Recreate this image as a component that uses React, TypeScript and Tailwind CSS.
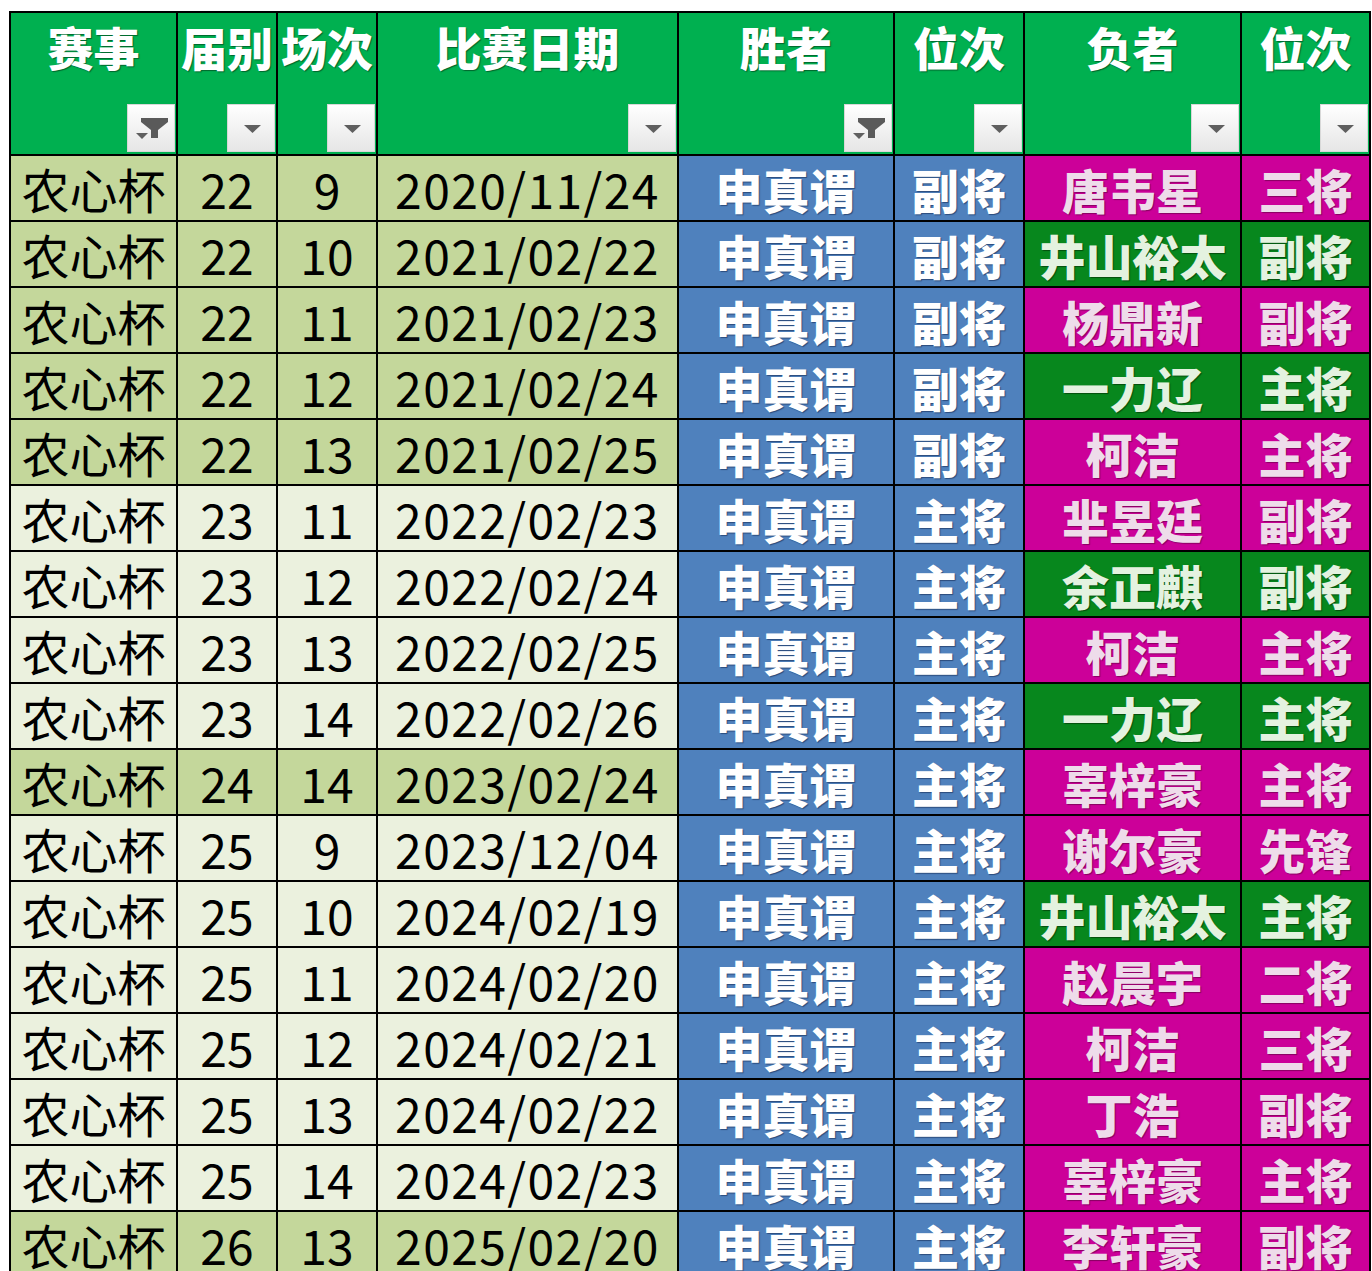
import React from "react";

type Row = {
  s: string;
  j: string;
  c: string;
  d: string;
  wp: string;
  l: string;
  lg: boolean;
  lp: string;
};

const rows: Row[] = [
  { s: "农心杯", j: "22", c: "9", d: "2020/11/24", wp: "副将", l: "唐韦星", lg: false, lp: "三将" },
  { s: "农心杯", j: "22", c: "10", d: "2021/02/22", wp: "副将", l: "井山裕太", lg: true, lp: "副将" },
  { s: "农心杯", j: "22", c: "11", d: "2021/02/23", wp: "副将", l: "杨鼎新", lg: false, lp: "副将" },
  { s: "农心杯", j: "22", c: "12", d: "2021/02/24", wp: "副将", l: "一力辽", lg: true, lp: "主将" },
  { s: "农心杯", j: "22", c: "13", d: "2021/02/25", wp: "副将", l: "柯洁", lg: false, lp: "主将" },
  { s: "农心杯", j: "23", c: "11", d: "2022/02/23", wp: "主将", l: "芈昱廷", lg: false, lp: "副将" },
  { s: "农心杯", j: "23", c: "12", d: "2022/02/24", wp: "主将", l: "余正麒", lg: true, lp: "副将" },
  { s: "农心杯", j: "23", c: "13", d: "2022/02/25", wp: "主将", l: "柯洁", lg: false, lp: "主将" },
  { s: "农心杯", j: "23", c: "14", d: "2022/02/26", wp: "主将", l: "一力辽", lg: true, lp: "主将" },
  { s: "农心杯", j: "24", c: "14", d: "2023/02/24", wp: "主将", l: "辜梓豪", lg: false, lp: "主将" },
  { s: "农心杯", j: "25", c: "9", d: "2023/12/04", wp: "主将", l: "谢尔豪", lg: false, lp: "先锋" },
  { s: "农心杯", j: "25", c: "10", d: "2024/02/19", wp: "主将", l: "井山裕太", lg: true, lp: "主将" },
  { s: "农心杯", j: "25", c: "11", d: "2024/02/20", wp: "主将", l: "赵晨宇", lg: false, lp: "二将" },
  { s: "农心杯", j: "25", c: "12", d: "2024/02/21", wp: "主将", l: "柯洁", lg: false, lp: "三将" },
  { s: "农心杯", j: "25", c: "13", d: "2024/02/22", wp: "主将", l: "丁浩", lg: false, lp: "副将" },
  { s: "农心杯", j: "25", c: "14", d: "2024/02/23", wp: "主将", l: "辜梓豪", lg: false, lp: "主将" },
  { s: "农心杯", j: "26", c: "13", d: "2025/02/20", wp: "主将", l: "李轩豪", lg: false, lp: "副将" },
];

function DropArrow() {
  return (
    <svg width="48" height="48" viewBox="0 0 48 48">
      <polygon points="16,20 33,20 24.5,28" fill="#5f5f5f" />
    </svg>
  );
}

function FilterIcon() {
  return (
    <svg width="48" height="48" viewBox="0 0 48 48">
      <polygon points="13,13 40,13 40,17 30,25 30,33 23,33 23,25 13,17" fill="#5a5a5a" />
      <polygon points="8,28 20,28 14,34" fill="#5f5f5f" />
    </svg>
  );
}

function Header({ label, filtered }: { label: string; filtered?: boolean }) {
  return (
    <div className="bg-[#00b050] flex flex-col">
      <div className="pt-[10px] text-center text-white font-black text-[46px] leading-none whitespace-nowrap [text-shadow:1px_1px_1px_rgba(0,70,30,0.7)]">
        {label}
      </div>
      <div className="flex-1" />
      <div className="self-end mr-[1px] mb-[2px] w-[48px] h-[48px] bg-linear-to-b from-white to-[#e6e6e6] border border-[#d8d8d8]">
        {filtered ? <FilterIcon /> : <DropArrow />}
      </div>
    </div>
  );
}

export default function App() {
  const headers: { t: string; f?: boolean }[] = [
    { t: "赛事", f: true },
    { t: "届别" },
    { t: "场次" },
    { t: "比赛日期" },
    { t: "胜者", f: true },
    { t: "位次" },
    { t: "负者" },
    { t: "位次" },
  ];
  return (
    <div className="w-[1372px] h-[1271px] overflow-hidden bg-white font-['Noto_Sans_CJK_SC','Noto_Sans',sans-serif]">
      <div className="ml-[9px] mt-[11px] w-[1362px] bg-black p-[2px] grid gap-[2px] grid-cols-[165px_98px_98px_299px_214px_128px_215px_127px] grid-rows-[141px] auto-rows-[64px]">
        {headers.map((h, i) => (
          <Header key={i} label={h.t} filtered={h.f} />
        ))}
        {rows.map((r, i) => {
          const base = r.j === "22" || r.j === "24" || r.j === "26" ? "bg-[#c4d79b]" : "bg-[#ebf1de]";
          const lose = r.lg
            ? "bg-[#07871d] text-[#e4f2e0] [text-shadow:1px_1px_1px_rgba(0,40,0,0.6)]"
            : "bg-[#cc0099] text-[#eedcea] [text-shadow:1px_1px_1px_rgba(90,0,60,0.6)]";
          const plain = `${base} flex items-center justify-center text-black text-[48px] leading-none whitespace-nowrap`;
          const bold = "flex items-center justify-center font-black text-[47px] leading-none whitespace-nowrap";
          return (
            <React.Fragment key={i}>
              <div className={plain}>{r.s}</div>
              <div className={plain}>{r.j}</div>
              <div className={plain}>{r.c}</div>
              <div className={`${plain} tracking-[1.4px]`}>{r.d}</div>
              <div className={`${bold} bg-[#4f81bd] text-white [text-shadow:1px_1px_1px_rgba(20,40,80,0.6)]`}>申真谓</div>
              <div className={`${bold} bg-[#4f81bd] text-white [text-shadow:1px_1px_1px_rgba(20,40,80,0.6)]`}>{r.wp}</div>
              <div className={`${bold} ${lose}`}>{r.l}</div>
              <div className={`${bold} ${lose}`}>{r.lp}</div>
            </React.Fragment>
          );
        })}
      </div>
    </div>
  );
}
